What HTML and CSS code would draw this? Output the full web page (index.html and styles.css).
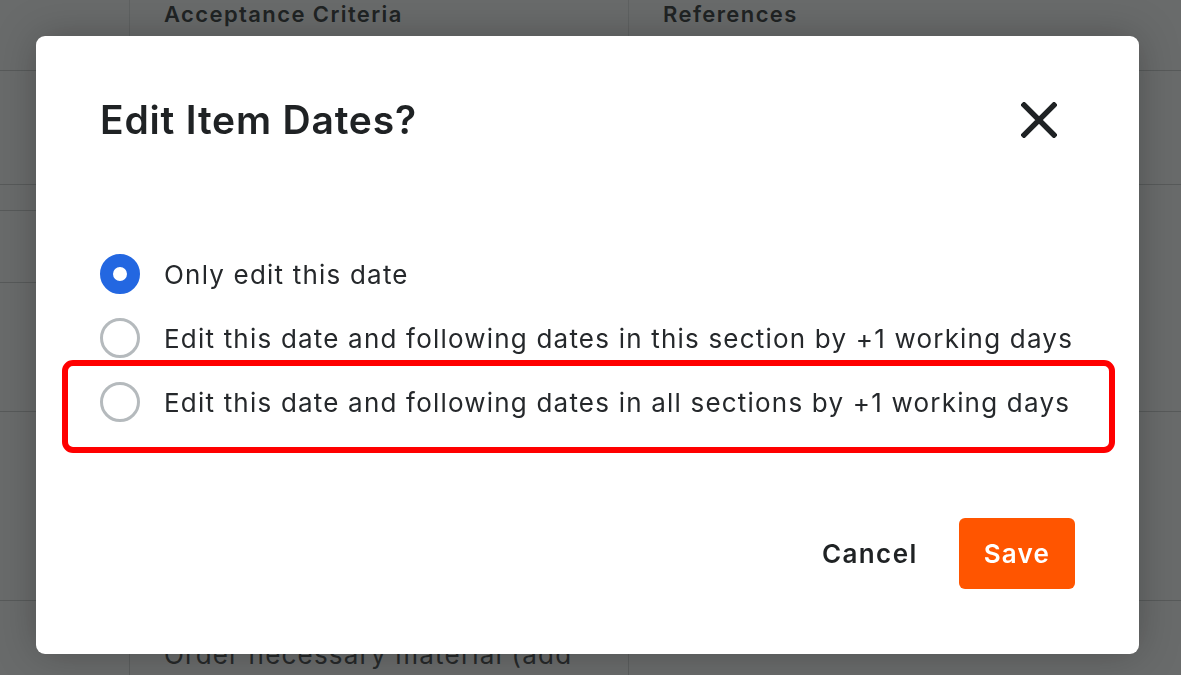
FILE: index.html
```html
<!DOCTYPE html>
<html>
<head>
<meta charset="utf-8">
<link rel="stylesheet" href="styles.css">
</head>
<body>
<div class="page">
  <div class="row row-head">
    <div class="cell c1"></div>
    <div class="cell c2"><span class="head-text">Acceptance Criteria</span></div>
    <div class="cell c3"><span class="head-text">References</span></div>
  </div>
  <div class="row row-a">
    <div class="cell c1"></div>
    <div class="cell c2"></div>
    <div class="cell c3"></div>
  </div>
  <div class="row row-b">
    <div class="cell c1 split">
      <div class="sub s1"></div>
      <div class="sub s2"></div>
      <div class="sub s3"></div>
    </div>
    <div class="cell c2"></div>
    <div class="cell c3"></div>
  </div>
  <div class="row row-c">
    <div class="cell c1"></div>
    <div class="cell c2"></div>
    <div class="cell c3"></div>
  </div>
  <div class="row row-d">
    <div class="cell c1"></div>
    <div class="cell c2"><span class="body-text">Order necessary material (add</span></div>
    <div class="cell c3"></div>
  </div>
</div>

<div class="overlay">
  <div class="modal">
    <div class="modal-header">
      <h2 class="title">Edit Item Dates?</h2>
      <button class="close" aria-label="Close">
        <svg width="36" height="36" viewBox="0 0 36 36">
          <path d="M3 3 L33 33 M33 3 L3 33" stroke="#1f2224" stroke-width="5.4" stroke-linecap="square" fill="none"/>
        </svg>
      </button>
    </div>
    <div class="options">
      <div class="option">
        <span class="radio checked"></span>
        <span class="label">Only edit this date</span>
      </div>
      <div class="option">
        <span class="radio"></span>
        <span class="label">Edit this date and following dates in this section by +1 working days</span>
      </div>
      <div class="option highlight">
        <span class="radio"></span>
        <span class="label">Edit this date and following dates in all sections by +1 working days</span>
      </div>
    </div>
    <div class="footer">
      <button class="btn cancel">Cancel</button>
      <button class="btn save">Save</button>
    </div>
  </div>
</div>
</body>
</html>
```

FILE: styles.css
```css
* { box-sizing: border-box; }
html, body { margin: 0; padding: 0; }
body {
  width: 1181px;
  height: 675px;
  overflow: hidden;
  font-family: Inter, "Noto Sans", sans-serif;
  background: #ffffff;
}

/* background page */
.page { width: 1181px; height: 675px; overflow: hidden; }
.row {
  display: grid;
  grid-template-columns: 130px 499px 1fr;
  border-bottom: 1px solid #cfd1d1;
}
.cell { border-right: 1px solid #d9dbdb; }
.cell.c3 { border-right: none; }
.row-head { height: 71px; }
.row-a { height: 114px; }
.row-b { height: 227px; }
.row-c { height: 189px; }
.row-d { height: 74px; border-bottom: none; }
.row-head .cell { border-right-color: #e3e5e5; }
.head-text {
  display: block;
  padding: 0 0 0 34px;
  font-size: 22px;
  font-weight: 600;
  color: #3a3d3e;
  line-height: 28px;
  letter-spacing: 1.4px;
}
.split { display: flex; flex-direction: column; }
.sub { border-bottom: 1px solid #cfd1d1; }
.s1 { height: 26px; }
.s2 { height: 72px; }
.s3 { border-bottom: none; flex: 1; }
.body-text {
  display: block;
  padding: 38px 0 0 34px;
  font-size: 26px;
  color: #4a4d4f;
  line-height: 32px;
  letter-spacing: 1.2px;
  white-space: nowrap;
}

/* overlay + modal */
.overlay {
  position: fixed;
  inset: 0;
  background: rgba(18, 20, 20, 0.63);
  padding: 36px 0 0 36px;
}
.modal {
  width: 1103px;
  background: #ffffff;
  border-radius: 9px;
  padding: 64px 64px 65px 64px;
  box-shadow: 0 0 40px rgba(0, 0, 0, 0.25);
}
.modal-header {
  display: flex;
  align-items: center;
  justify-content: space-between;
  height: 40px;
}
.title {
  margin: 0;
  font-size: 39px;
  font-weight: 600;
  color: #1f2224;
  line-height: 40px;
  letter-spacing: 0.8px;
}
.close {
  border: none;
  background: none;
  padding: 0;
  margin-right: 18px;
  width: 36px;
  height: 36px;
  display: flex;
}

.options {
  margin-top: 102px;
  display: flex;
  flex-direction: column;
}
.option {
  position: relative;
  height: 64px;
  display: flex;
  align-items: center;
  gap: 24px;
}
.radio {
  width: 40px;
  height: 40px;
  border-radius: 50%;
  border: 3px solid #b5babd;
  background: #fff;
  flex: none;
}
.radio.checked {
  border: 13px solid #2367e1;
}
.label {
  font-size: 26px;
  color: #25282b;
  letter-spacing: 1.2px;
  white-space: nowrap;
}
.highlight::after {
  content: "";
  position: absolute;
  top: -10px;
  bottom: -19px;
  left: -38px;
  right: -40px;
  border: 6px solid #ff0000;
  border-radius: 11px;
  pointer-events: none;
}

.footer {
  margin-top: 84px;
  display: flex;
  justify-content: flex-end;
  align-items: center;
  gap: 17px;
}
.btn {
  font-family: Inter, "Noto Sans", sans-serif;
  font-size: 26px;
  font-weight: 600;
  border: none;
  height: 71px;
  padding: 0 24px;
  border-radius: 6px;
  letter-spacing: 1.4px;
}
.cancel { background: transparent; color: #1f2224; }
.save { background: #ff5500; color: #ffffff; padding: 0 25px; letter-spacing: 1.2px; }
```
